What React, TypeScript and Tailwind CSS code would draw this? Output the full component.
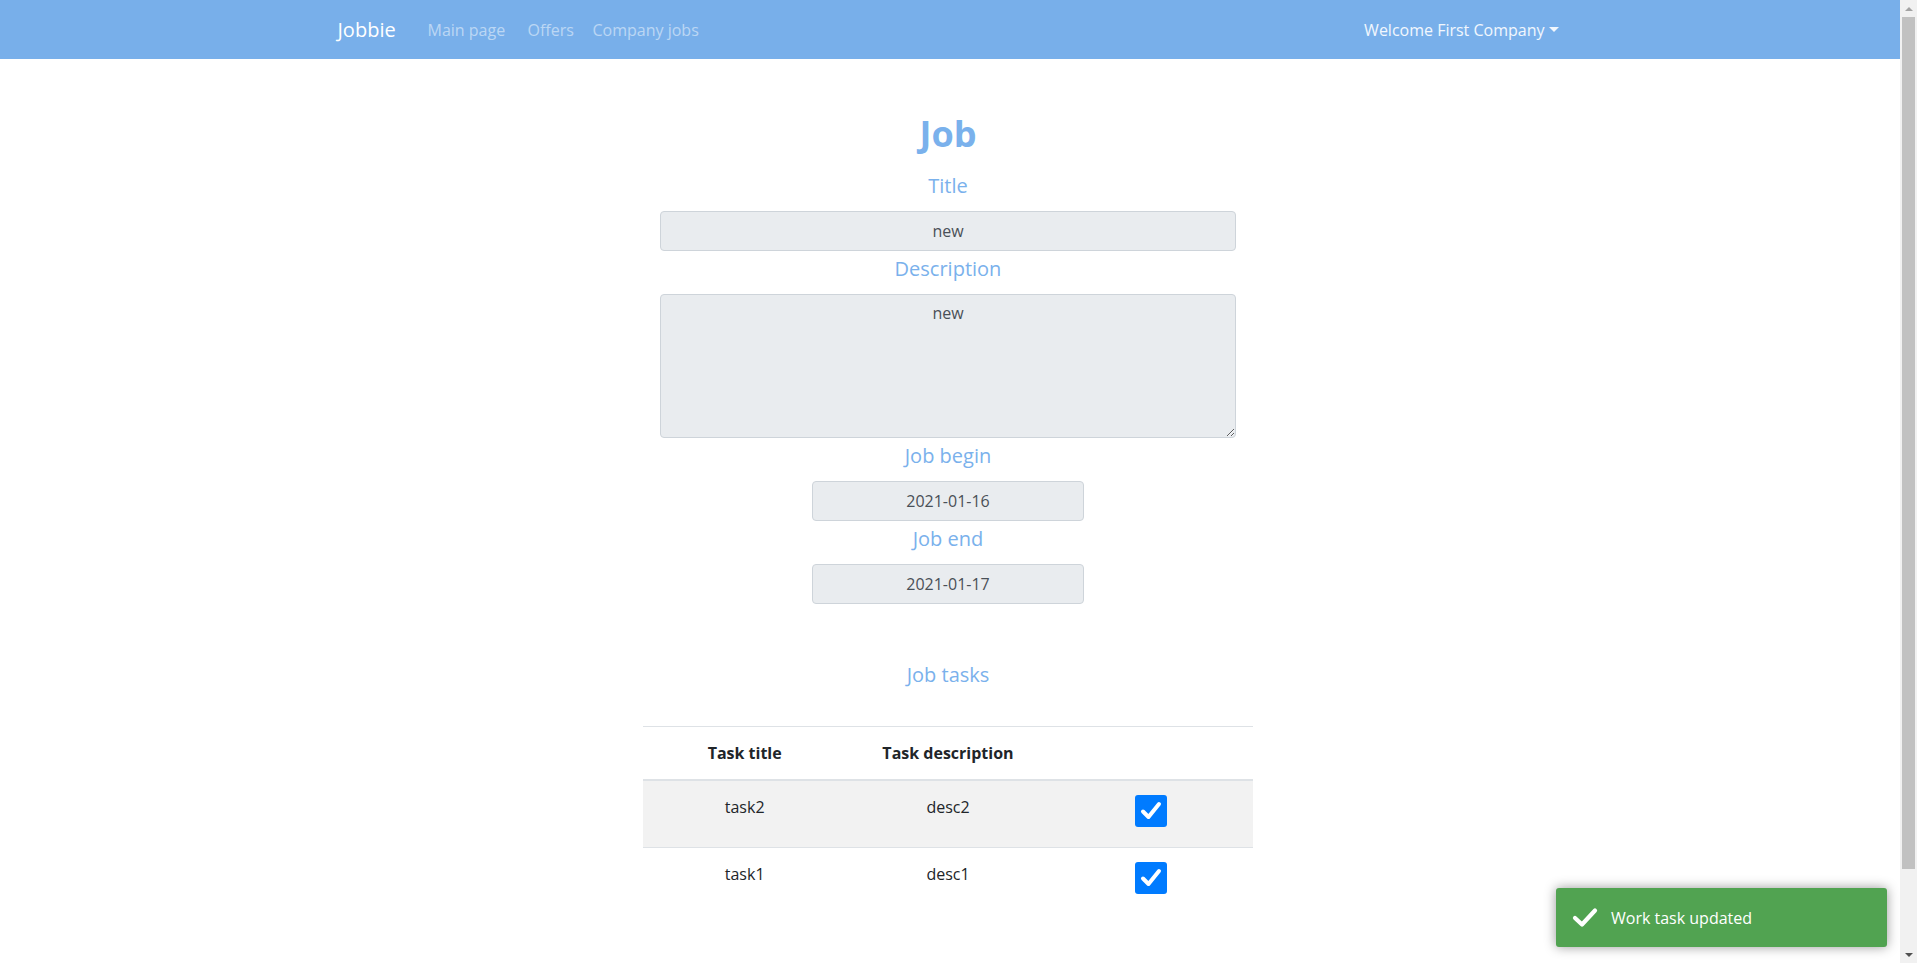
import { useState } from "react";

const tasks = [
  { title: "task2", description: "desc2", done: true },
  { title: "task1", description: "desc1", done: true },
];

function CheckBox({ checked }: { checked: boolean }) {
  return (
    <div className="w-[32px] h-[32px] rounded-[3px] bg-[#007bff] flex items-center justify-center">
      {checked && (
        <svg width="24" height="24" viewBox="0 0 24 24" fill="none">
          <path d="M4 12.5 L9.5 18 L20 5" stroke="white" strokeWidth="4" strokeLinecap="round" strokeLinejoin="round" />
        </svg>
      )}
    </div>
  );
}

export default function App() {
  const [title] = useState("new");
  const [description] = useState("new");

  const label = "h-[30px] leading-[30px] text-[20px] text-[#7ab1ec] text-center";
  const field =
    "block h-[40px] rounded-[4px] border border-[#ced4da] bg-[#e9ecef] text-center text-[16px] text-[#495057] outline-none";

  return (
    <div className="flex h-screen w-full overflow-hidden bg-white font-['Open_Sans',sans-serif]">
      <div className="relative flex-1 flex flex-col">
        {/* Navbar */}
        <nav className="h-[59px] bg-[#78afea] shrink-0">
          <div className="mx-auto w-[1221px] h-full flex items-center justify-between translate-x-[-2px]">
            <div className="flex items-center">
              <span className="w-[90px] text-[20px] text-white">Jobbie</span>
              <span className="w-[100px] text-[16px] text-white/50">Main page</span>
              <span className="w-[65px] text-[16px] text-white/50">Offers</span>
              <span className="text-[16px] text-white/50">Company jobs</span>
            </div>
            <div className="flex items-center text-[16px] text-white/90">
              Welcome First Company
              <span className="ml-[4px] w-0 h-0 border-l-[5px] border-r-[5px] border-t-[5px] border-l-transparent border-r-transparent border-t-white/90" />
            </div>
          </div>
        </nav>

        {/* Job form */}
        <main className="flex flex-col items-center pt-[56px] pr-[4px]">
          <h2 className="h-[38px] leading-[38px] text-[36px] font-bold text-[#7ab1ec]">Job</h2>

          <div className={`${label} mt-[18px]`}>Title</div>
          <input readOnly value={title} className={`${field} mt-[10px] w-[576px]`} />

          <div className={`${label} mt-[3px]`}>Description</div>
          <textarea
            readOnly
            value={description}
            className="block mt-[10px] w-[576px] h-[144px] rounded-[4px] border border-[#ced4da] bg-[#e9ecef] text-center text-[16px] leading-[24px] text-[#495057] px-[12px] py-[6px] outline-none"
          />

          <div className={`${label} mt-[3px]`}>Job begin</div>
          <input readOnly value="2021-01-16" className={`${field} mt-[10px] w-[272px]`} />

          <div className={`${label} mt-[3px]`}>Job end</div>
          <input readOnly value="2021-01-17" className={`${field} mt-[10px] w-[272px]`} />

          <div className={`${label} mt-[56px]`}>Job tasks</div>

          {/* Tasks table */}
          <div className="mt-[36px] w-[610px] text-[16px] text-[#212529]">
            <div className="grid grid-cols-3 h-[55px] items-center border-t border-b-2 border-[#dee2e6] font-bold text-center">
              <span>Task title</span>
              <span>Task description</span>
              <span />
            </div>
            {tasks.map((task, i) => (
              <div
                key={task.title}
                className={`grid grid-cols-3 h-[66px] items-start pt-[14px] text-center ${
                  i % 2 === 0 ? "bg-[#f2f2f2]" : "border-t border-[#dee2e6]"
                }`}
              >
                <span className="leading-[24px]">{task.title}</span>
                <span className="leading-[24px]">{task.description}</span>
                <div className="flex justify-center">
                  <CheckBox checked={task.done} />
                </div>
              </div>
            ))}
          </div>
        </main>

        {/* Toast */}
        <div className="absolute right-[13px] bottom-[16px] w-[331px] h-[59px] rounded-[3px] bg-[#51a351] shadow-[0_0_12px_#999] flex items-center pl-[16px] text-white">
          <svg width="26" height="21" viewBox="0 0 26 21" fill="none">
            <path d="M3 11 L10 17.5 L23 3.5" stroke="white" strokeWidth="4.2" strokeLinecap="round" strokeLinejoin="round" />
          </svg>
          <span className="ml-[13px] text-[16px]">Work task updated</span>
        </div>
      </div>

      {/* Scrollbar */}
      <div className="w-[17px] h-full bg-[#f1f1f1] flex flex-col shrink-0">
        <div className="h-[17px] flex items-center justify-center">
          <span className="w-0 h-0 border-l-[4px] border-r-[4px] border-b-[4px] border-l-transparent border-r-transparent border-b-[#a3a3a3]" />
        </div>
        <div className="mx-[2px] h-[852px] bg-[#c1c1c1]" />
        <div className="flex-1" />
        <div className="h-[17px] flex items-center justify-center">
          <span className="w-0 h-0 border-l-[4px] border-r-[4px] border-t-[4px] border-l-transparent border-r-transparent border-t-[#505050]" />
        </div>
      </div>
    </div>
  );
}
